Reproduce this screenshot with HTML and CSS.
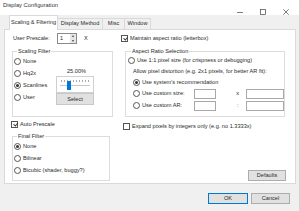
FILE: index.html
```html
<!DOCTYPE html>
<html>
<head>
<meta charset="utf-8">
<link rel="stylesheet" href="styles.css">
</head>
<body>
<div class="window">
  <div class="titlebar">
    <span class="title">Display Configuration</span>
    <div class="controls">
      <span class="ctl">
        <svg width="6" height="6" viewBox="0 0 6 6"><path d="M0 3.5H6" stroke="#444" stroke-width="0.7"/></svg>
      </span>
      <span class="ctl">
        <svg width="6" height="6" viewBox="0 0 6 6"><rect x="0.5" y="0.5" width="5" height="5" fill="none" stroke="#444" stroke-width="0.7"/></svg>
      </span>
      <span class="ctl">
        <svg width="6" height="6" viewBox="0 0 6 6"><path d="M0.3 0.3L5.7 5.7M5.7 0.3L0.3 5.7" stroke="#444" stroke-width="0.7"/></svg>
      </span>
    </div>
  </div>
  <div class="tabs">
    <span class="tab sel t1">Scaling &amp; Filtering</span>
    <span class="tab t2">Display Method</span>
    <span class="tab t3">Misc</span>
    <span class="tab t4">Window</span>
  </div>
  <div class="panel">
    <div class="left">
      <div class="prescale">
        <span class="plabel">User Prescale:</span>
        <span class="spin"><span class="spinval">1</span><span class="arrows"><span class="up"></span><span class="down"></span></span></span>
        <span class="xlabel">X</span>
      </div>
      <fieldset class="group g-scale">
        <legend>Scaling Filter</legend>
        <div class="scale-body">
          <div class="radios">
            <div class="opt"><span class="radio"></span>None</div>
            <div class="opt"><span class="radio"></span>Hq2x</div>
            <div class="opt"><span class="radio on"></span>Scanlines</div>
            <div class="opt"><span class="radio"></span>User</div>
          </div>
          <div class="slider-widget">
            <div class="pct">25.00%</div>
            <div class="slider">
              <span class="ticks"></span>
              <span class="track"></span>
              <span class="thumb"></span>
            </div>
            <div class="btn select">Select</div>
          </div>
        </div>
      </fieldset>
      <div class="opt check-row auto"><span class="check on"></span>Auto Prescale</div>
      <fieldset class="group g-final">
        <legend>Final Filter</legend>
        <div class="opt"><span class="radio on"></span>None</div>
        <div class="opt"><span class="radio"></span>Bilinear</div>
        <div class="opt"><span class="radio"></span>Bicubic (shader, buggy?)</div>
      </fieldset>
    </div>
    <div class="right">
      <div class="opt check-row maintain"><span class="check on"></span>Maintain aspect ratio (letterbox)</div>
      <fieldset class="group g-ar">
        <legend>Aspect Ratio Selection</legend>
        <div class="opt r1"><span class="radio"></span>Use 1:1 pixel size (for crispness or debugging)</div>
        <div class="allow">Allow pixel distortion (e.g. 2x1 pixels, for better AR fit):</div>
        <div class="opt sub"><span class="radio on"></span>Use system's recommendation</div>
        <div class="opt sub custom"><span class="radio"></span><span class="clabel">Use custom size:</span><span class="box b1"></span><span class="sep">x</span><span class="box b2"></span></div>
        <div class="opt sub custom"><span class="radio"></span><span class="clabel">Use custom AR:</span><span class="box b1"></span><span class="sep">:</span><span class="box b2"></span></div>
      </fieldset>
      <div class="opt check-row expand"><span class="check"></span>Expand pixels by integers only (e.g. no 1.3333x)</div>
      <div class="btn defaults">Defaults</div>
    </div>
  </div>
  <div class="footer">
    <div class="btn ok">OK</div>
    <div class="btn cancel">Cancel</div>
  </div>
</div>
</body>
</html>
```
FILE: styles.css
```css
* { box-sizing: border-box; }
html, body { margin: 0; padding: 0; }
body {
  width: 300px;
  height: 211px;
  overflow: hidden;
  background: #f0f0f0;
  font-family: "Liberation Sans", Arial, sans-serif;
  font-size: 5.6px;
  line-height: 7px;
  color: #2a2a2a;
}
.window {
  width: 300px;
  height: 211px;
  border-right: 1px solid #d4d4d4;
}
.titlebar {
  height: 15px;
  background: #fff;
  display: flex;
  align-items: flex-start;
}
.title {
  padding: 2px 0 0 3px;
  font-size: 5.8px;
  color: #333;
}
.controls {
  margin-left: auto;
  display: flex;
  padding-top: 8px;
  padding-right: 2px;
}
.ctl {
  width: 23px;
  height: 7px;
  display: flex;
  justify-content: center;
  align-items: center;
}
.tabs {
  height: 14px;
  display: flex;
  align-items: flex-end;
  padding-left: 9px;
}
.tab {
  height: 11px;
  border: 1px solid #d9d9d9;
  border-bottom: none;
  background: #f0f0f0;
  text-align: center;
  line-height: 9px;
  margin-left: -1px;
  white-space: nowrap;
}
.tab.sel {
  height: 15px;
  background: #fff;
  position: relative;
  z-index: 1;
  margin-bottom: -1px;
  line-height: 13px;
  margin-left: 0;
}
.t1 { width: 49px; }
.t2 { width: 46px; }
.t3 { width: 23px; }
.t4 { width: 27px; }
.panel {
  margin-left: 4px;
  width: 292px;
  height: 155px;
  border: 1px solid #d9d9d9;
  background: #fff;
  display: flex;
  padding: 3px 0 0 7px;
  gap: 8px;
}
.left {
  width: 101px;
  display: flex;
  flex-direction: column;
}
.right {
  width: 164px;
  display: flex;
  flex-direction: column;
}
.prescale {
  height: 11px;
  display: flex;
  align-items: center;
}
.plabel {
  width: 45px;
  padding-left: 1px;
}
.spin {
  width: 20px;
  height: 11px;
  border: 1px solid #8a8a8a;
  display: flex;
  align-items: center;
  justify-content: space-between;
  padding-left: 2px;
}
.arrows {
  width: 6px;
  height: 9px;
  display: flex;
  flex-direction: column;
  justify-content: space-around;
  align-items: center;
  background: #e6e6e6;
}
.up, .down {
  width: 0;
  height: 0;
  border-left: 1.5px solid transparent;
  border-right: 1.5px solid transparent;
}
.up { border-bottom: 2px solid #444; }
.down { border-top: 2px solid #444; }
.xlabel { margin-left: 7px; }

.group {
  margin: 0;
  padding: 0 0 0 1px;
  border: 1px solid #dcdcdc;
  min-width: 0;
}
.group legend {
  padding: 0 1px;
  margin-left: 3px;
  line-height: 7px;
}
.g-scale {
  margin-top: 4px;
  height: 69px;
}
.scale-body {
  display: flex;
}
.radios {
  width: 42px;
}
.opt {
  height: 12px;
  display: flex;
  align-items: center;
  white-space: nowrap;
}
.radio {
  width: 7px;
  height: 7px;
  border: 1px solid #555;
  border-radius: 50%;
  margin-right: 2px;
  flex: none;
  display: flex;
  align-items: center;
  justify-content: center;
  background: #fff;
}
.radio.on::after {
  content: "";
  width: 3px;
  height: 3px;
  border-radius: 50%;
  background: #333;
}
.check {
  width: 7px;
  height: 7px;
  border: 1px solid #555;
  margin-right: 2px;
  flex: none;
  position: relative;
  background: #fff;
}
.check.on::after {
  content: "";
  position: absolute;
  left: 1.6px;
  top: 0.3px;
  width: 1.8px;
  height: 3.4px;
  border-right: 1px solid #333;
  border-bottom: 1px solid #333;
  transform: rotate(40deg);
}
.slider-widget {
  margin-top: 13px;
  width: 38px;
  display: flex;
  flex-direction: column;
}
.pct {
  height: 8px;
  text-align: center;
  padding-left: 3px;
}
.slider {
  height: 17px;
  border: 1px solid #d0d0d0;
  background: #fff;
  position: relative;
}
.ticks {
  position: absolute;
  left: 4px;
  right: 4px;
  top: 3px;
  height: 2px;
  background: repeating-linear-gradient(90deg, #aaa 0 0.6px, transparent 0.6px 3px);
}
.track {
  position: absolute;
  left: 3px;
  right: 3px;
  top: 8px;
  height: 1px;
  background: #c8c8c8;
}
.thumb {
  position: absolute;
  left: 10px;
  top: 4px;
  width: 4px;
  height: 9px;
  background: #0078d7;
  border-radius: 1px 1px 0.5px 0.5px;
}
.btn {
  background: #e1e1e1;
  border: 1px solid #adadad;
  text-align: center;
  display: flex;
  align-items: center;
  justify-content: center;
}
.select {
  height: 12px;
  border-color: #c8c8c8;
}
.check-row {
  height: 8px;
}
.auto {
  margin-top: 3px;
  margin-left: -1px;
}
.g-final {
  margin-top: 5px;
  width: 98px;
  height: 48px;
}
.maintain {
  height: 11px;
}
.g-ar {
  margin-top: 4px;
  margin-left: 4px;
  width: 160px;
  height: 69px;
  padding-left: 2px;
}
.g-ar .opt {
  height: 11px;
}
.allow {
  height: 11px;
  display: flex;
  align-items: center;
  padding-left: 5px;
  white-space: nowrap;
}
.g-ar .sub {
  padding-left: 5px;
}
.clabel {
  width: 53px;
}
.box {
  height: 10px;
  border: 1px solid #a8a8a8;
  background: #fff;
}
.b1 { width: 22px; }
.b2 { width: 39px; }
.sep {
  width: 30px;
  text-align: center;
  padding-left: 14px;
}
.custom + .custom { margin-top: 1px; }
.expand {
  margin-top: 5px;
  margin-left: 2px;
}
.defaults {
  margin-top: auto;
  align-self: flex-end;
  width: 38px;
  height: 11px;
  margin-right: -1px;
  margin-bottom: 2px;
}
.footer {
  display: flex;
  justify-content: flex-end;
  gap: 3px;
  padding: 9px 9px 0 0;
}
.ok {
  width: 40px;
  height: 11px;
  border-color: #0078d7;
}
.cancel {
  width: 39px;
  height: 11px;
}
```
